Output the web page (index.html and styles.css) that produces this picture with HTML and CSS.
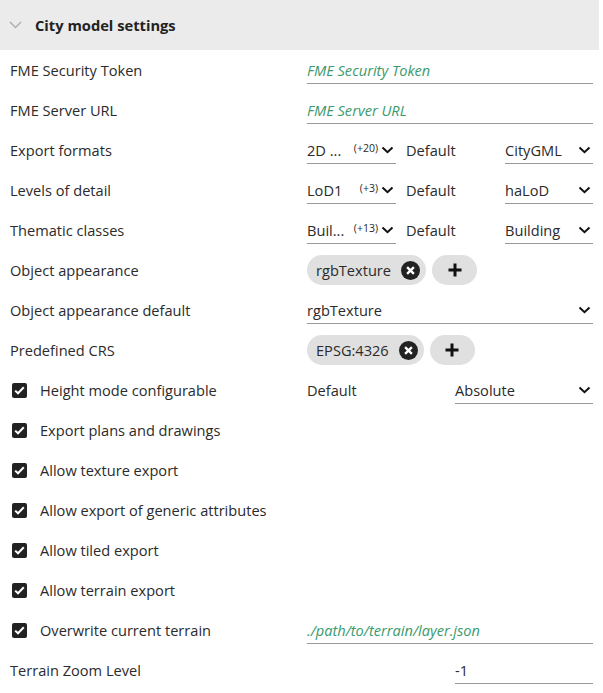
FILE: index.html
```html
<!DOCTYPE html>
<html lang="en">
<head>
    <meta charset="UTF-8">
    <title>City model settings</title>
    <link rel="stylesheet" href="styles.css">
</head>
<body>
    <div class="panel">
        <div class="header">
            <svg class="toggle" width="13" height="8" viewBox="0 0 13 8"><path d="M1 1 L6.5 6.5 L12 1" fill="none" stroke="#b0b0b0" stroke-width="1.5"/></svg>
            <span class="title">City model settings</span>
        </div>

        <div class="row">
            <div class="label">FME Security Token</div>
            <div class="field"><div class="input placeholder">FME Security Token</div></div>
        </div>
        <div class="row">
            <div class="label">FME Server URL</div>
            <div class="field"><div class="input placeholder">FME Server URL</div></div>
        </div>
        <div class="row">
            <div class="label">Export formats</div>
            <div class="field triple">
                <div class="select"><span class="value">2D ...</span><span class="more">(+20)</span><svg class="chev" width="13" height="8" viewBox="0 0 13 8"><path d="M1.5 1.5 L6.5 6.2 L11.5 1.5" fill="none" stroke="#111" stroke-width="2"/></svg></div>
                <div class="text">Default</div>
                <div class="select"><span class="value">CityGML</span><svg class="chev" width="13" height="8" viewBox="0 0 13 8"><path d="M1.5 1.5 L6.5 6.2 L11.5 1.5" fill="none" stroke="#111" stroke-width="2"/></svg></div>
            </div>
        </div>
        <div class="row">
            <div class="label">Levels of detail</div>
            <div class="field triple">
                <div class="select"><span class="value">LoD1</span><span class="more">(+3)</span><svg class="chev" width="13" height="8" viewBox="0 0 13 8"><path d="M1.5 1.5 L6.5 6.2 L11.5 1.5" fill="none" stroke="#111" stroke-width="2"/></svg></div>
                <div class="text">Default</div>
                <div class="select"><span class="value">haLoD</span><svg class="chev" width="13" height="8" viewBox="0 0 13 8"><path d="M1.5 1.5 L6.5 6.2 L11.5 1.5" fill="none" stroke="#111" stroke-width="2"/></svg></div>
            </div>
        </div>
        <div class="row">
            <div class="label">Thematic classes</div>
            <div class="field triple">
                <div class="select"><span class="value">Buil...</span><span class="more">(+13)</span><svg class="chev" width="13" height="8" viewBox="0 0 13 8"><path d="M1.5 1.5 L6.5 6.2 L11.5 1.5" fill="none" stroke="#111" stroke-width="2"/></svg></div>
                <div class="text">Default</div>
                <div class="select"><span class="value">Building</span><svg class="chev" width="13" height="8" viewBox="0 0 13 8"><path d="M1.5 1.5 L6.5 6.2 L11.5 1.5" fill="none" stroke="#111" stroke-width="2"/></svg></div>
            </div>
        </div>
        <div class="row">
            <div class="label">Object appearance</div>
            <div class="field chips">
                <div class="chip">rgbTexture<svg class="close" width="19" height="19" viewBox="0 0 18 18"><circle cx="9" cy="9" r="9" fill="#222"/><path d="M5.8 5.8 L12.2 12.2 M12.2 5.8 L5.8 12.2" stroke="#fff" stroke-width="2.2"/></svg></div>
                <div class="chip add"><svg width="16" height="16" viewBox="0 0 16 16"><path d="M8 1.5 V14.5 M1.5 8 H14.5" stroke="#111" stroke-width="3"/></svg></div>
            </div>
        </div>
        <div class="row">
            <div class="label">Object appearance default</div>
            <div class="field">
                <div class="select"><span class="value">rgbTexture</span><svg class="chev" width="13" height="8" viewBox="0 0 13 8"><path d="M1.5 1.5 L6.5 6.2 L11.5 1.5" fill="none" stroke="#111" stroke-width="2"/></svg></div>
            </div>
        </div>
        <div class="row">
            <div class="label">Predefined CRS</div>
            <div class="field chips">
                <div class="chip">EPSG:4326<svg class="close" width="19" height="19" viewBox="0 0 18 18"><circle cx="9" cy="9" r="9" fill="#222"/><path d="M5.8 5.8 L12.2 12.2 M12.2 5.8 L5.8 12.2" stroke="#fff" stroke-width="2.2"/></svg></div>
                <div class="chip add"><svg width="16" height="16" viewBox="0 0 16 16"><path d="M8 1.5 V14.5 M1.5 8 H14.5" stroke="#111" stroke-width="3"/></svg></div>
            </div>
        </div>
        <div class="row">
            <label class="label check"><span class="box"><svg width="11" height="9" viewBox="0 0 11 9"><path d="M1.2 4.6 L4 7.3 L9.8 1.3" fill="none" stroke="#fff" stroke-width="2"/></svg></span>Height mode configurable</label>
            <div class="field double">
                <div class="text">Default</div>
                <div class="select"><span class="value">Absolute</span><svg class="chev" width="13" height="8" viewBox="0 0 13 8"><path d="M1.5 1.5 L6.5 6.2 L11.5 1.5" fill="none" stroke="#111" stroke-width="2"/></svg></div>
            </div>
        </div>
        <div class="row">
            <label class="label check"><span class="box"><svg width="11" height="9" viewBox="0 0 11 9"><path d="M1.2 4.6 L4 7.3 L9.8 1.3" fill="none" stroke="#fff" stroke-width="2"/></svg></span>Export plans and drawings</label>
        </div>
        <div class="row">
            <label class="label check"><span class="box"><svg width="11" height="9" viewBox="0 0 11 9"><path d="M1.2 4.6 L4 7.3 L9.8 1.3" fill="none" stroke="#fff" stroke-width="2"/></svg></span>Allow texture export</label>
        </div>
        <div class="row">
            <label class="label check"><span class="box"><svg width="11" height="9" viewBox="0 0 11 9"><path d="M1.2 4.6 L4 7.3 L9.8 1.3" fill="none" stroke="#fff" stroke-width="2"/></svg></span>Allow export of generic attributes</label>
        </div>
        <div class="row">
            <label class="label check"><span class="box"><svg width="11" height="9" viewBox="0 0 11 9"><path d="M1.2 4.6 L4 7.3 L9.8 1.3" fill="none" stroke="#fff" stroke-width="2"/></svg></span>Allow tiled export</label>
        </div>
        <div class="row">
            <label class="label check"><span class="box"><svg width="11" height="9" viewBox="0 0 11 9"><path d="M1.2 4.6 L4 7.3 L9.8 1.3" fill="none" stroke="#fff" stroke-width="2"/></svg></span>Allow terrain export</label>
        </div>
        <div class="row">
            <label class="label check"><span class="box"><svg width="11" height="9" viewBox="0 0 11 9"><path d="M1.2 4.6 L4 7.3 L9.8 1.3" fill="none" stroke="#fff" stroke-width="2"/></svg></span>Overwrite current terrain</label>
            <div class="field"><div class="input path">./path/to/terrain/layer.json</div></div>
        </div>
        <div class="row">
            <div class="label">Terrain Zoom Level</div>
            <div class="field double">
                <div></div>
                <div class="input number">-1</div>
            </div>
        </div>
    </div>
</body>
</html>
```

FILE: styles.css
```css
body {
    margin: 0;
    background: #fff;
    color: #2b2b2b;
    font-family: 'Open Sans', sans-serif;
    font-size: 14.6px;
}

.panel {
    width: 599px;
}

.header {
    height: 50px;
    background: #ebebeb;
    display: flex;
    align-items: center;
    padding-left: 9px;
    gap: 13px;
}

.title {
    font-weight: 700;
    font-size: 14.7px;
    color: #222;
}

.row {
    height: 40px;
    display: grid;
    grid-template-columns: 297px 286px;
    align-items: center;
    padding-left: 10px;
}

.label {
    white-space: nowrap;
}

.check {
    display: flex;
    align-items: center;
    gap: 13px;
    padding-left: 2px;
}

.box {
    width: 15px;
    height: 15px;
    border-radius: 2px;
    background: #222;
    display: flex;
    align-items: center;
    justify-content: center;
}

.field {
    height: 28px;
    display: flex;
    align-items: stretch;
}

.triple {
    display: grid;
    grid-template-columns: 89px 1fr 88px;
    column-gap: 10px;
}

.double {
    display: grid;
    grid-template-columns: 1fr 138px;
}

.input, .select {
    flex: 1;
    display: flex;
    align-items: center;
    border-bottom: 1px solid #999;
    min-width: 0;
}

.placeholder, .path {
    color: #3a9a6c;
    font-style: italic;
}

.select .value {
    flex: 1;
    white-space: nowrap;
}

.select .more {
    font-size: 10.5px;
    margin-right: 3px;
    margin-top: -4px;
}

.chev {
    margin-right: 2px;
}

.text {
    display: flex;
    align-items: center;
}

.chips {
    gap: 6px;
}

.chip {
    display: flex;
    align-items: center;
    gap: 10px;
    height: 30px;
    margin-top: -1px;
    padding: 0 6px 0 9px;
    border-radius: 15px;
    background: #e0e0e0;
}

.chip.add {
    width: 45px;
    padding: 0;
    justify-content: center;
}
```
